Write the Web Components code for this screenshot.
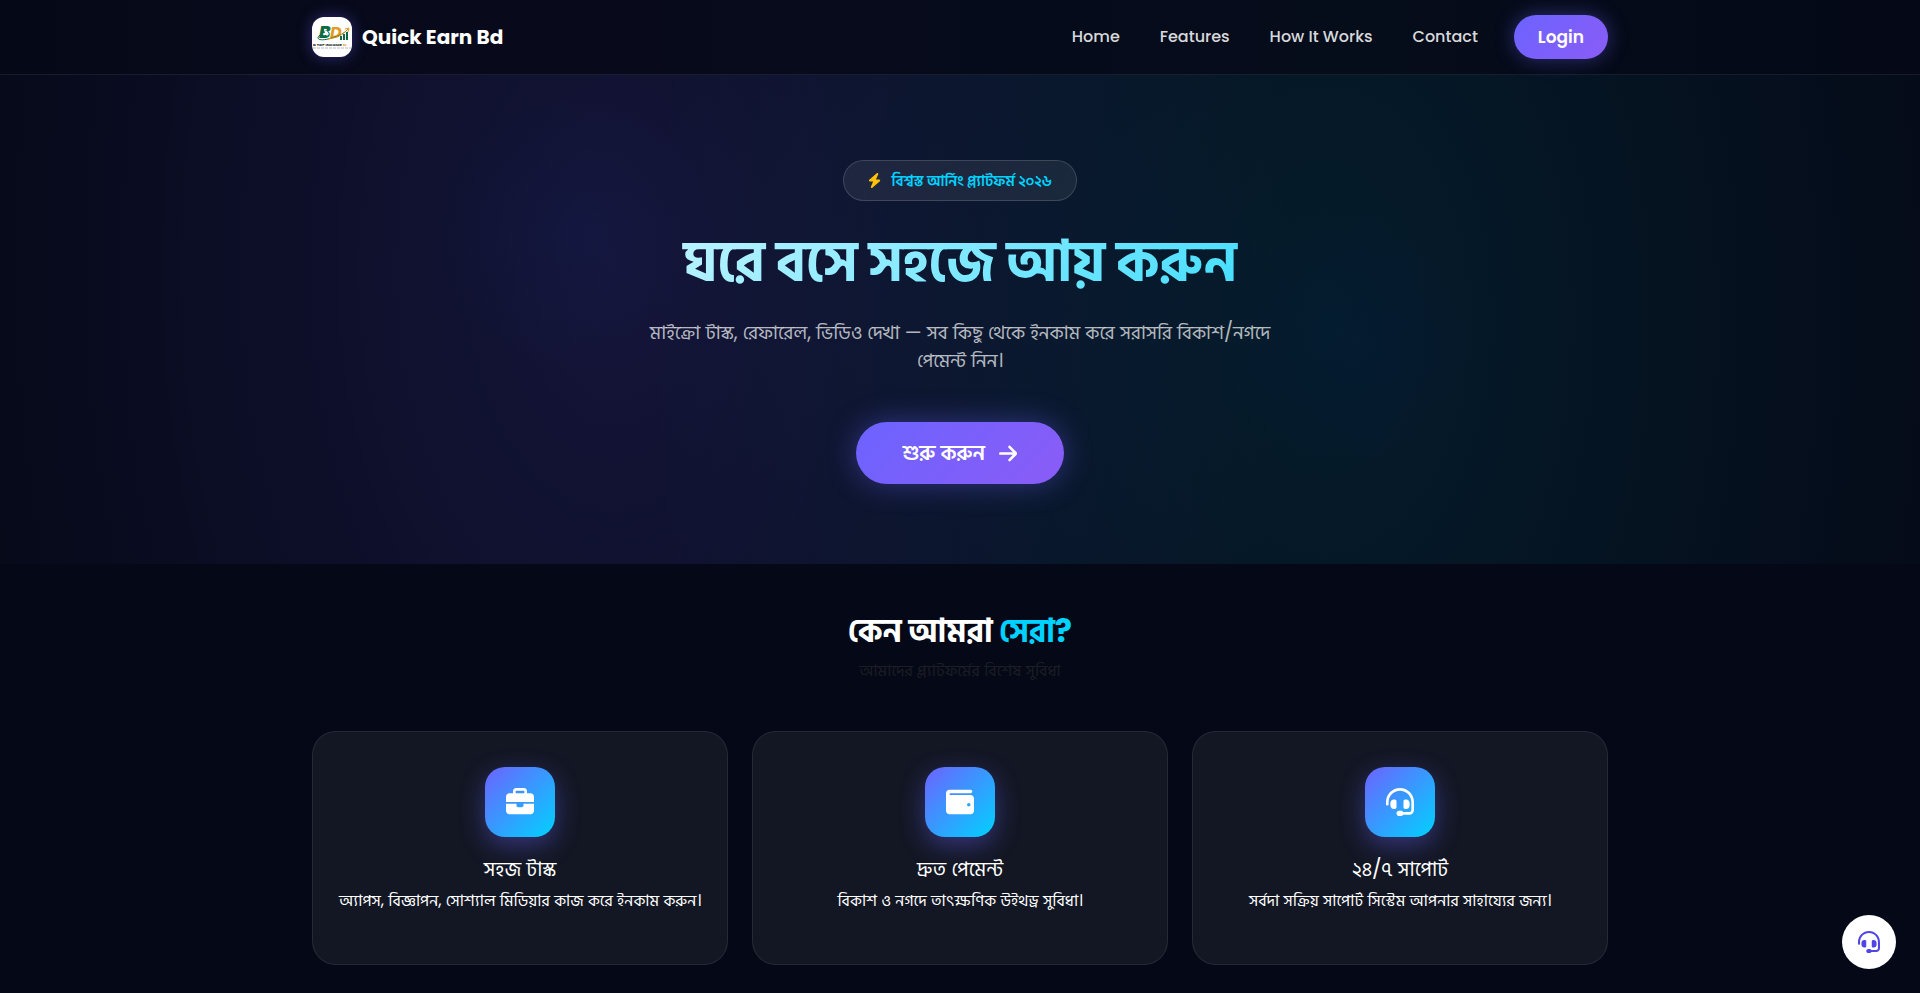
<!DOCTYPE html>
<html lang="bn">
<head>
<meta charset="utf-8">
<meta name="viewport" content="width=device-width, initial-scale=1">
<title>Quick Earn Bd</title>
<style>
    :root {
        --bg: #050917;
        --primary: #6c63ff;
        --violet: #8b5cf6;
        --cyan: #00d2ff;
        --container: 1296px;
    }

    body {
        margin: 0;
        background: var(--bg);
        color: #fff;
        font-family: 'Poppins', 'Hind Siliguri', 'Noto Sans Bengali', 'Inter', sans-serif;
        font-size: 16px;
        line-height: 24px;
    }
</style>
</head>
<body>
    <site-header>
        <nav-link href="#home">Home</nav-link>
        <nav-link href="#features">Features</nav-link>
        <nav-link href="#how">How It Works</nav-link>
        <nav-link href="#contact">Contact</nav-link>
    </site-header>

    <main>
        <hero-banner id="home">
            <span slot="badge">বিশ্বস্ত আর্নিং প্ল্যাটফর্ম ২০২৬</span>
            <span slot="title">ঘরে বসে সহজে আয় করুন</span>
            <span slot="text">মাইক্রো টাস্ক, রেফারেল, ভিডিও দেখা — সব কিছু থেকে ইনকাম করে সরাসরি বিকাশ/নগদে পেমেন্ট নিন।</span>
            <span slot="action">শুরু করুন</span>
        </hero-banner>

        <feature-section id="features">
            <feature-card icon="briefcase">
                <span slot="title">সহজ টাস্ক</span>
                অ্যাপস, বিজ্ঞাপন, সোশ্যাল মিডিয়ার কাজ করে ইনকাম করুন।
            </feature-card>
            <feature-card icon="wallet">
                <span slot="title">দ্রুত পেমেন্ট</span>
                বিকাশ ও নগদে তাৎক্ষণিক উইথড্র সুবিধা।
            </feature-card>
            <feature-card icon="headset">
                <span slot="title">২৪/৭ সাপোর্ট</span>
                সর্বদা সক্রিয় সাপোর্ট সিস্টেম আপনার সাহায্যের জন্য।
            </feature-card>
        </feature-section>
    </main>

    <support-button></support-button>

<script>
const ICONS = {
    bolt: ['0 0 448 512', 'M349.4 44.6c5.9-13.7 1.5-29.7-10.6-38.5s-28.6-8-39.9 1.8l-256 224c-10 8.8-13.6 22.9-8.9 35.3S50.7 288 64 288H175.5L98.6 467.4c-5.9 13.7-1.5 29.7 10.6 38.5s28.6 8 39.9-1.8l256-224c10-8.8 13.6-22.9 8.9-35.3s-16.6-20.7-30-20.7H272.5L349.4 44.6z'],
    arrow: ['0 0 448 512', 'M438.6 278.6c12.5-12.5 12.5-32.8 0-45.3l-160-160c-12.5-12.5-32.8-12.5-45.3 0s-12.5 32.8 0 45.3L338.8 224 32 224c-17.7 0-32 14.3-32 32s14.3 32 32 32l306.7 0L233.4 393.4c-12.5 12.5-12.5 32.8 0 45.3s32.8 12.5 45.3 0l160-160z'],
    briefcase: ['0 0 512 512', 'M184 48H328c4.4 0 8 3.6 8 8V96H176V56c0-4.4 3.6-8 8-8zm-56 8V96H64C28.7 96 0 124.7 0 160v96H192 320 512V160c0-35.3-28.7-64-64-64H384V56c0-30.9-25.1-56-56-56H184c-30.9 0-56 25.1-56 56zM512 288H320v32c0 17.7-14.3 32-32 32H224c-17.7 0-32-14.3-32-32V288H0V416c0 35.3 28.7 64 64 64H448c35.3 0 64-28.7 64-64V288z'],
    wallet: ['0 0 512 512', 'M64 32C28.7 32 0 60.7 0 96V416c0 35.3 28.7 64 64 64H448c35.3 0 64-28.7 64-64V192c0-35.3-28.7-64-64-64H80c-8.8 0-16-7.2-16-16s7.2-16 16-16H448c17.7 0 32-14.3 32-32s-14.3-32-32-32H64zM416 272a32 32 0 1 1 0 64 32 32 0 1 1 0-64z'],
    headset: ['0 0 512 512', 'M256 48C141.1 48 48 141.1 48 256v40c0 13.3-10.7 24-24 24s-24-10.7-24-24V256C0 114.6 114.6 0 256 0S512 114.6 512 256V400.1c0 48.6-39.4 88-88.1 88L313.6 488c-8.3 14.3-23.8 24-41.6 24H240c-26.5 0-48-21.5-48-48s21.5-48 48-48h32c17.8 0 33.3 9.7 41.6 24l110.4 .1c22.1 0 40-17.9 40-40V256c0-114.9-93.1-208-208-208zM144 208h16c17.7 0 32 14.3 32 32V352c0 17.7-14.3 32-32 32H144c-35.3 0-64-28.7-64-64V272c0-35.3 28.7-64 64-64zm224 0c35.3 0 64 28.7 64 64v48c0 35.3-28.7 64-64 64H352c-17.7 0-32-14.3-32-32V240c0-17.7 14.3-32 32-32h16z']
};

class AppIcon extends HTMLElement {
    constructor() {
        super();
        this.attachShadow({ mode: 'open' });
    }

    connectedCallback() {
        const [viewBox, path] = ICONS[this.getAttribute('name')];
        this.shadowRoot.innerHTML = `
            <style>
                :host { display: inline-flex; }
                svg { height: 1em; fill: currentColor; }
            </style>
            <svg viewBox="${viewBox}" aria-hidden="true"><path d="${path}"/></svg>
        `;
    }
}

class BrandLogo extends HTMLElement {
    constructor() {
        super();
        this.attachShadow({ mode: 'open' });
        this.shadowRoot.innerHTML = `
            <style>
                :host {
                    display: block;
                    width: 40px;
                    height: 40px;
                    border-radius: 12px;
                    overflow: hidden;
                    background: #fff;
                    box-shadow: 0 0 15px rgba(108, 99, 255, 0.4);
                }

                svg { display: block; }

                text { font-family: 'Poppins', sans-serif; }
            </style>
            <svg viewBox="0 0 40 40" role="img" aria-label="BD Top Income Site">
                <text x="7" y="21" font-size="17" font-weight="800" font-style="italic" fill="#0c6b43">B</text>
                <text x="18" y="21" font-size="16" font-weight="700" font-style="italic" fill="#e59a1c">D</text>
                <path d="M12 13l3 1 2 3-2 2-2-3z" fill="#fff"/>
                <path d="M8 18C3 22 8 24 16 22S31 18 36 12" fill="none" stroke="#0c6b43" stroke-width="1"/>
                <path d="M16 22C25 21 32 17 36 12M33 12l4-1-1 4" fill="none" stroke="#e59a1c" stroke-width="1"/>
                <path d="M28 19h2v4h-2zM31 17h2v6h-2zM34 15h2v8h-2z" fill="#0c6b43"/>
                <text x="1" y="29" font-size="4" font-weight="700" fill="#222">D TOP INCOME <tspan fill="#e59a1c">SI</tspan></text>
                <path d="M1 31h38" stroke="#bbb" stroke-width="1" stroke-dasharray="3 1"/>
            </svg>
        `;
    }
}

class NavLink extends HTMLElement {
    constructor() {
        super();
        this.attachShadow({ mode: 'open' });
        this.shadowRoot.innerHTML = `
            <style>
                :host { display: block; }

                a {
                    display: block;
                    padding: 8px;
                    color: rgba(255, 255, 255, 0.85);
                    font-weight: 500;
                    text-decoration: none;
                    transition: color 0.3s ease;
                }

                a:hover { color: var(--cyan); }
            </style>
            <a><slot></slot></a>
        `;
    }

    connectedCallback() {
        this.shadowRoot.querySelector('a').setAttribute('href', this.getAttribute('href'));
    }
}

class SiteHeader extends HTMLElement {
    constructor() {
        super();
        this.attachShadow({ mode: 'open' });
        this.shadowRoot.innerHTML = `
            <style>
                :host {
                    display: block;
                    position: sticky;
                    top: 0;
                    z-index: 10;
                    background: linear-gradient(90deg, var(--bg), #080a1c 28%, #050c1a 70%, var(--bg));
                    border-bottom: 1px solid rgba(255, 255, 255, 0.08);
                }

                .bar {
                    display: flex;
                    align-items: center;
                    justify-content: space-between;
                    max-width: var(--container);
                    margin: 0 auto;
                    padding: 15px 12px;
                }

                .brand {
                    display: flex;
                    align-items: center;
                    gap: 10px;
                    color: #fff;
                    font-size: 20px;
                    font-weight: 700;
                    text-decoration: none;
                }

                nav {
                    display: flex;
                    align-items: center;
                    gap: 24px;
                }

                .login {
                    padding: 10px 24px;
                    border-radius: 50px;
                    background: linear-gradient(135deg, var(--primary), var(--violet));
                    box-shadow: 0 0 20px rgba(108, 99, 255, 0.4);
                    color: #fff;
                    font-size: 17px;
                    font-weight: 600;
                    text-decoration: none;
                    margin-left: 4px;
                }
            </style>
            <div class="bar">
                <a class="brand" href="#home"><brand-logo></brand-logo><span>Quick Earn Bd</span></a>
                <nav>
                    <slot></slot>
                    <a class="login" href="#login">Login</a>
                </nav>
            </div>
        `;
    }
}

class HeroBanner extends HTMLElement {
    constructor() {
        super();
        this.attachShadow({ mode: 'open' });
        this.shadowRoot.innerHTML = `
            <style>
                :host {
                    display: flex;
                    flex-direction: column;
                    align-items: center;
                    padding: 85px 12px 80px;
                    text-align: center;
                    background:
                        radial-gradient(circle 140px at 71% 55%, rgba(0, 30, 140, 0.07), transparent),
                        radial-gradient(circle 140px at 30% 32%, rgba(20, 60, 180, 0.06), transparent),
                        radial-gradient(ellipse 680px 1100px at 69% 50%, rgba(0, 185, 205, 0.11), transparent),
                        radial-gradient(ellipse 680px 1100px at 32% 40%, rgba(108, 90, 255, 0.15), transparent),
                        var(--bg);
                }

                .badge {
                    display: inline-flex;
                    align-items: center;
                    gap: 10px;
                    padding: 8px 24px;
                    border: 1px solid rgba(255, 255, 255, 0.15);
                    border-radius: 50px;
                    background: rgba(255, 255, 255, 0.07);
                    color: var(--cyan);
                    font-size: 15px;
                    font-weight: 600;
                    line-height: 23px;
                }

                .badge app-icon { color: #ffc107; }

                h1 {
                    width: 100%;
                    max-width: var(--container);
                    margin: 26px 0 22px;
                    font-size: 56px;
                    font-weight: 800;
                    line-height: 70px;
                    background: linear-gradient(135deg, #fff, var(--cyan));
                    -webkit-background-clip: text;
                    background-clip: text;
                    color: transparent;
                }

                p {
                    max-width: 650px;
                    margin: 0 0 47px;
                    color: rgba(255, 255, 255, 0.7);
                    font-size: 19px;
                    line-height: 28px;
                }

                .start {
                    display: inline-flex;
                    align-items: center;
                    gap: 14px;
                    padding: 16px 47px;
                    border-radius: 50px;
                    background: linear-gradient(135deg, var(--primary), var(--violet));
                    box-shadow: 0 0 30px rgba(108, 99, 255, 0.4);
                    color: #fff;
                    font-size: 21px;
                    font-weight: 600;
                    line-height: 30px;
                    text-decoration: none;
                }
            </style>
            <div class="badge"><app-icon name="bolt"></app-icon><slot name="badge"></slot></div>
            <h1><slot name="title"></slot></h1>
            <p><slot name="text"></slot></p>
            <a class="start" href="#start"><slot name="action"></slot><app-icon name="arrow"></app-icon></a>
        `;
    }
}

class FeatureSection extends HTMLElement {
    constructor() {
        super();
        this.attachShadow({ mode: 'open' });
        this.shadowRoot.innerHTML = `
            <style>
                :host {
                    display: block;
                    max-width: var(--container);
                    margin: 0 auto;
                    padding: 48px 12px 28px;
                }

                .heading {
                    margin-bottom: 48px;
                    text-align: center;
                }

                h2 {
                    margin: 0 0 9px;
                    font-size: 32px;
                    font-weight: 700;
                    line-height: 38px;
                }

                h2 span { color: var(--cyan); }

                p { margin: 0; color: rgba(33, 37, 41, 0.75); }

                .grid {
                    display: grid;
                    grid-template-columns: repeat(auto-fit, minmax(320px, 1fr));
                    gap: 24px;
                }
            </style>
            <div class="heading">
                <h2>কেন আমরা <span>সেরা?</span></h2>
                <p>আমাদের প্ল্যাটফর্মের বিশেষ সুবিধা</p>
            </div>
            <div class="grid"><slot></slot></div>
        `;
    }
}

class FeatureCard extends HTMLElement {
    constructor() {
        super();
        this.attachShadow({ mode: 'open' });
    }

    connectedCallback() {
        this.shadowRoot.innerHTML = `
            <style>
                :host {
                    display: flex;
                    flex-direction: column;
                    align-items: center;
                    padding: 35px 24px 51px;
                    border: 1px solid rgba(255, 255, 255, 0.08);
                    border-radius: 24px;
                    background: rgba(255, 255, 255, 0.06);
                    text-align: center;
                }

                .icon {
                    display: flex;
                    align-items: center;
                    justify-content: center;
                    width: 70px;
                    height: 70px;
                    margin-bottom: 20px;
                    border-radius: 20px;
                    background: linear-gradient(135deg, var(--primary), var(--cyan));
                    box-shadow: 0 8px 25px rgba(108, 99, 255, 0.4);
                    font-size: 28px;
                }

                h3 {
                    margin: 0 0 8px;
                    font-size: 20px;
                    font-weight: 400;
                    line-height: 24px;
                }

                p { margin: 0; }
            </style>
            <div class="icon"><app-icon name="${this.getAttribute('icon')}"></app-icon></div>
            <h3><slot name="title"></slot></h3>
            <p><slot></slot></p>
        `;
    }
}

class SupportButton extends HTMLElement {
    constructor() {
        super();
        this.attachShadow({ mode: 'open' });
        this.shadowRoot.innerHTML = `
            <style>
                :host {
                    position: fixed;
                    right: 24px;
                    bottom: 24px;
                    z-index: 20;
                }

                button {
                    display: flex;
                    align-items: center;
                    justify-content: center;
                    width: 54px;
                    height: 54px;
                    padding: 0;
                    border: 0;
                    border-radius: 50%;
                    background: #fff;
                    color: #4f46e5;
                    font-size: 22px;
                    cursor: pointer;
                }
            </style>
            <button type="button" aria-label="Support"><app-icon name="headset"></app-icon></button>
        `;
    }
}

customElements.define('app-icon', AppIcon);
customElements.define('brand-logo', BrandLogo);
customElements.define('nav-link', NavLink);
customElements.define('site-header', SiteHeader);
customElements.define('hero-banner', HeroBanner);
customElements.define('feature-section', FeatureSection);
customElements.define('feature-card', FeatureCard);
customElements.define('support-button', SupportButton);
</script>
</body>
</html>
